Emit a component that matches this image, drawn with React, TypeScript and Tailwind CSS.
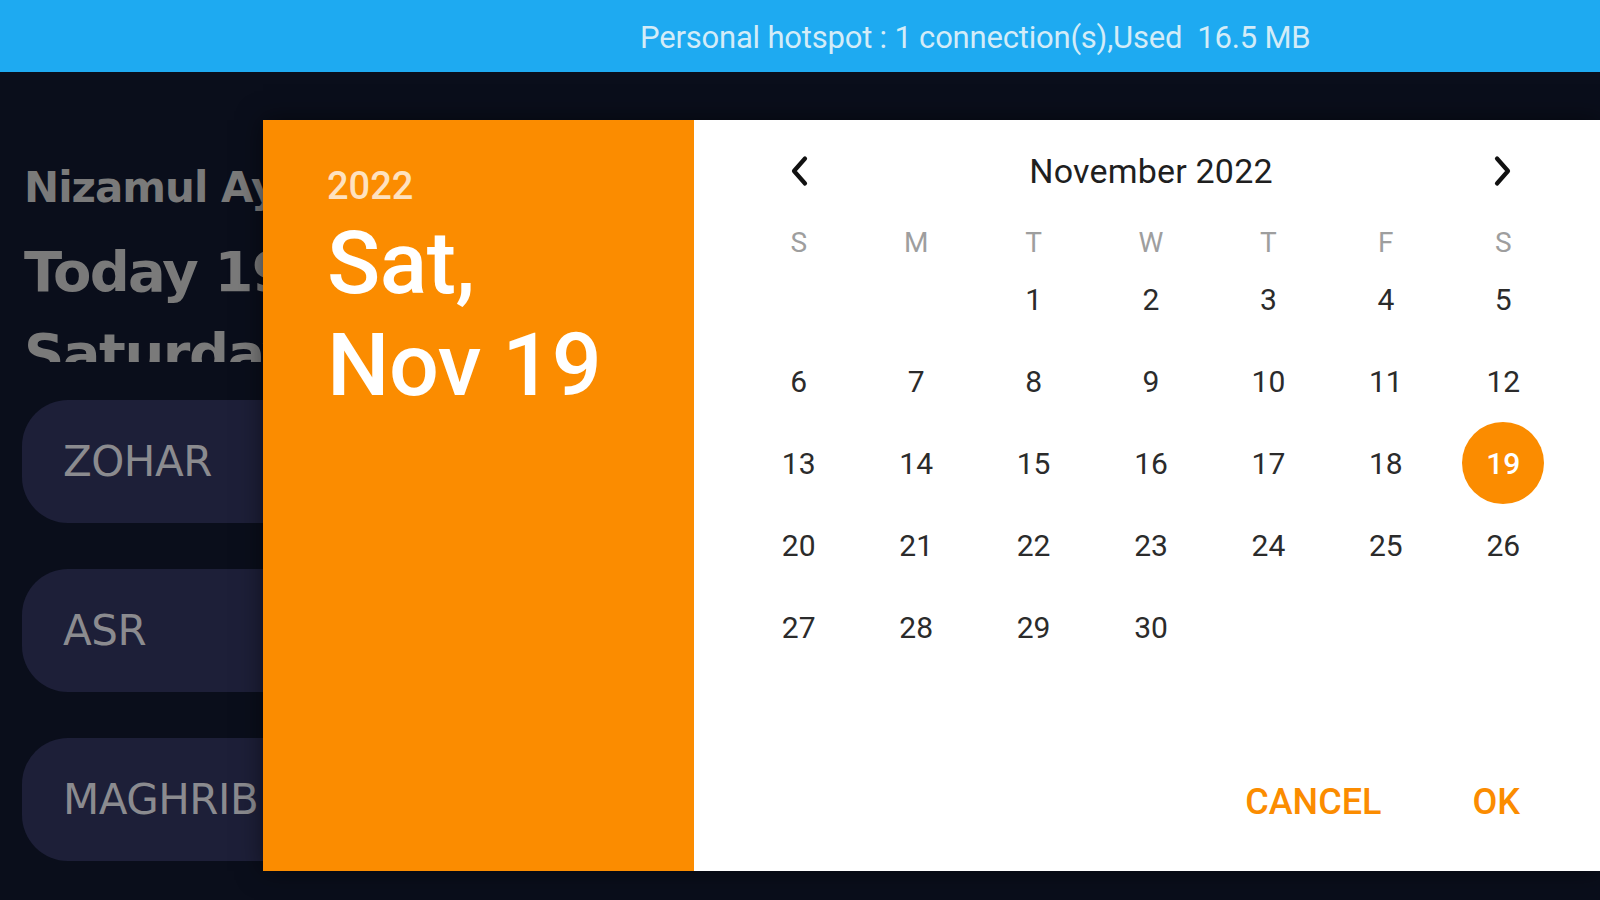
import React from "react";

const days: (number | null)[] = [
  null, null, 1, 2, 3, 4, 5,
  6, 7, 8, 9, 10, 11, 12,
  13, 14, 15, 16, 17, 18, 19,
  20, 21, 22, 23, 24, 25, 26,
  27, 28, 29, 30, null, null, null,
];

const weekdays = ["S", "M", "T", "W", "T", "F", "S"];

function Chevron({ dir }: { dir: "left" | "right" }) {
  return (
    <svg width="24" height="32" viewBox="0 0 24 32" fill="none">
      {dir === "left" ? (
        <path d="M18 3.5 L7 16 L18 28.5" stroke="#111111" strokeWidth="4.2" strokeLinecap="round" strokeLinejoin="round" />
      ) : (
        <path d="M6 3.5 L17 16 L6 28.5" stroke="#111111" strokeWidth="4.2" strokeLinecap="round" strokeLinejoin="round" />
      )}
    </svg>
  );
}

export default function App() {
  return (
    <div className="relative w-[1600px] h-[900px] overflow-hidden bg-[#0a0e1b]">
      {/* status bar */}
      <div className="h-[72px] bg-[#1eaaf1] flex items-center pl-[640px] pt-[4px]">
        <span className="text-[31px] text-[#d3ecf8] tracking-[-0.2px] whitespace-pre" style={{ fontFamily: "Roboto, sans-serif" }}>
          Personal hotspot : 1 connection(s),Used  16.5 MB
        </span>
      </div>

      {/* background app */}
      <div className="flex flex-col pl-[22px]" style={{ fontFamily: '"DejaVu Sans", sans-serif' }}>
        <div className="h-[290px] overflow-hidden pl-[2px] pt-[88px] text-[#7a7a7a] font-bold whitespace-nowrap">
          <div className="text-[42px] leading-[56px] tracking-[-1px]">Nizamul Ayaz Masjid</div>
          <div className="text-[56px] leading-[88px] mt-[12px] tracking-[-1.8px]">Today 19 Nov</div>
          <div className="text-[56px] leading-[88px] mt-[-6px] tracking-[-1.5px]">Saturday</div>
        </div>
        <div className="flex flex-col gap-[46px] mt-[38px]">
          {["ZOHAR", "ASR", "MAGHRIB"].map((p) => (
            <div key={p} className="w-[600px] h-[123px] rounded-[46px] bg-[#1d1f38] flex items-center pl-[41px]">
              <span className="text-[42px] text-[#8b8b8f] tracking-[-0.5px]">{p}</span>
            </div>
          ))}
        </div>
      </div>

      {/* dialog */}
      <div
        className="absolute left-[263px] top-[120px] w-[1337px] h-[751px] flex shadow-[0_0_24px_rgba(0,0,0,0.5)]"
        style={{ fontFamily: "Roboto, sans-serif" }}
      >
        <div className="w-[431px] bg-[#fb8c00] pl-[64px] pt-[44px] flex flex-col">
          <div className="text-[38px] leading-[44px] font-medium text-white/75">2022</div>
          <div className="mt-[4px] text-[88px] leading-[102px] font-medium text-white tracking-[-0.5px]">
            <div>Sat,</div>
            <div>Nov 19</div>
          </div>
        </div>
        <div className="flex-1 bg-white flex flex-col pt-[16px]">
          <div className="ml-[46px] w-[822px] h-[70px] grid grid-cols-7 items-center">
            <div className="flex justify-center">
              <Chevron dir="left" />
            </div>
            <div className="col-span-5 text-center text-[34px] text-[#1f1f1f] tracking-[0.2px]">November 2022</div>
            <div className="flex justify-center">
              <Chevron dir="right" />
            </div>
          </div>
          <div className="mt-[16px] ml-[46px] w-[822px] h-[36px] grid grid-cols-7 items-center">
            {weekdays.map((w, i) => (
              <div key={i} className="text-center text-[28px] text-[#9e9e9e]">
                {w}
              </div>
            ))}
          </div>
          <div className="ml-[46px] w-[822px] grid grid-cols-7">
            {days.map((d, i) => (
              <div key={i} className="h-[82px] flex items-center justify-center">
                {d === 19 ? (
                  <div className="w-[82px] h-[82px] rounded-full bg-[#fb8c00] flex items-center justify-center text-[30px] font-medium text-white">
                    19
                  </div>
                ) : d ? (
                  <span className="text-[30px] text-[#2b2b2b]">{d}</span>
                ) : null}
              </div>
            ))}
          </div>
          <div className="flex-1" />
          <div className="h-[64px] mb-[37px] flex items-center justify-end pr-[80px] gap-[91px]">
            <span className="text-[36px] font-medium text-[#fb8c00]">CANCEL</span>
            <span className="text-[36px] font-medium text-[#fb8c00]">OK</span>
          </div>
        </div>
      </div>
    </div>
  );
}
